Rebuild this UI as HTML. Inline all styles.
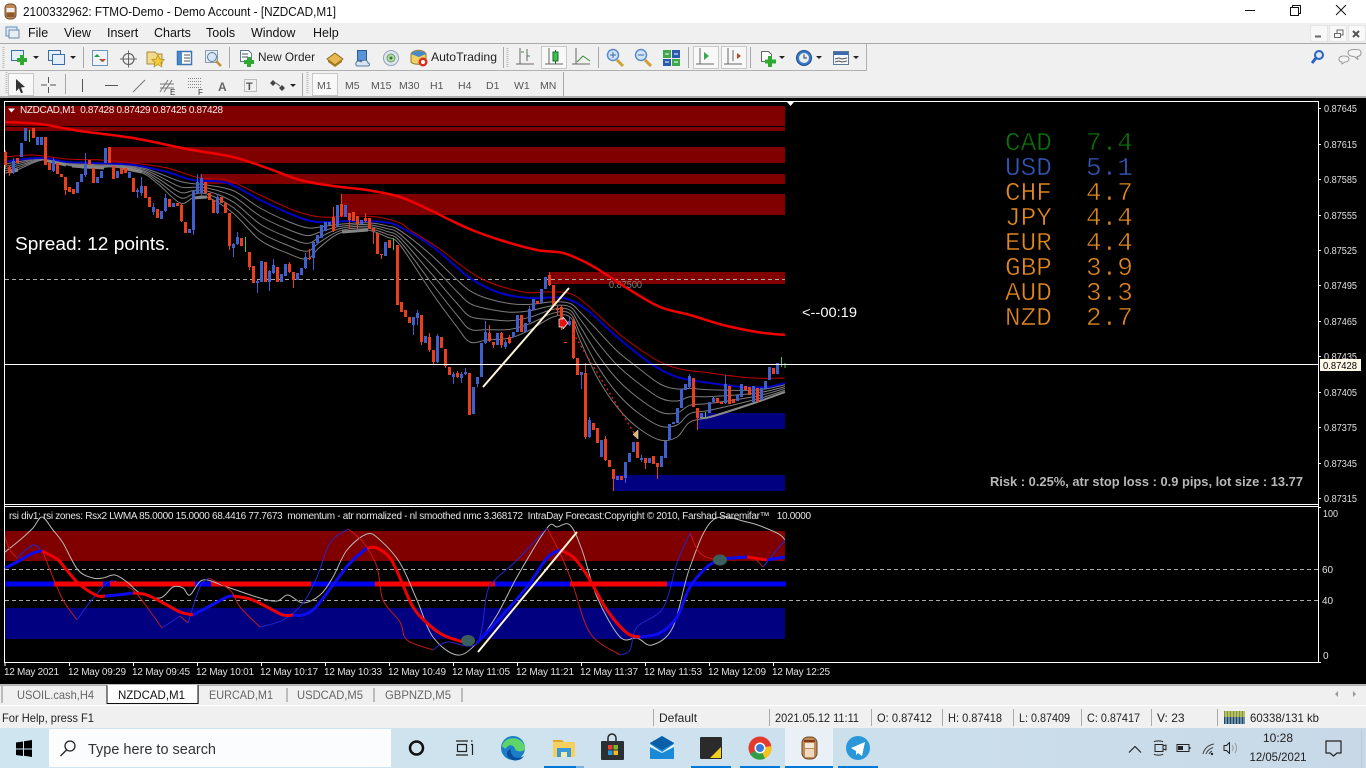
<!DOCTYPE html>
<html><head><meta charset="utf-8"><title>MT4</title>
<style>
html,body{margin:0;padding:0;background:#000;overflow:hidden}
svg{display:block;font-family:"Liberation Sans",sans-serif}
text{white-space:pre}
.m{font-size:12.5px;fill:#111}
.ax{font-size:10px;fill:#e0e0e0}
.tf{font-size:10.5px;fill:#555}
.st{font-size:12px;fill:#222}
.tb{font-size:12px;fill:#666}
.cur{font-family:"Liberation Mono",monospace;font-size:26px;stroke:#000;stroke-width:.55}
.sep{stroke:#a8a8a8;stroke-width:1}
.pr{fill:#f8f8f8;stroke:#c8c8c8}
path{stroke-linejoin:round}
</style></head><body>
<svg width="1366" height="768" viewBox="0 0 1366 768" xmlns="http://www.w3.org/2000/svg">
<!-- title -->
<rect width="1366" height="23" fill="#fff"/>
<g>
<rect x="5" y="4" width="11" height="15" rx="4" fill="#c08a55" stroke="#6b4a2c"/>
<rect x="6.500" y="8" width="8" height="4" fill="#eee"/>
<rect x="6.500" y="13" width="8" height="4" fill="#8a5a30"/>
</g>
<text x="23" y="16" class="m" textLength="313" lengthAdjust="spacingAndGlyphs">2100332962: FTMO-Demo - Demo Account - [NZDCAD,M1]</text>
<path d="M1245 10.5h10" stroke="#111"/>
<path d="M1290.500 7.500h8v8h-8zM1292.500 7.500v-2h8v8h-2" fill="none" stroke="#111"/>
<path d="M1336 5l10 10M1346 5l-10 10" stroke="#111"/>
<!-- menu -->
<rect y="23" width="1366" height="75" fill="#f0f0f0"/>
<g>
<rect x="6" y="27" width="11" height="9" fill="#dfeaf6" stroke="#5b8fc0"/><rect x="9" y="30" width="10" height="8" fill="#e8eef6" stroke="#6a8aa8"/>
<text x="28" y="37" class="m">File</text><text x="64" y="37" class="m">View</text><text x="107" y="37" class="m">Insert</text><text x="154" y="37" class="m">Charts</text><text x="206" y="37" class="m">Tools</text><text x="251" y="37" class="m">Window</text><text x="313" y="37" class="m">Help</text>
</g>
<g fill="#f8f8f8" stroke="#e4e4e4"><rect x="1310.500" y="25.500" width="17" height="16"/><rect x="1329.500" y="25.500" width="17" height="16"/><rect x="1348.500" y="25.500" width="17" height="16"/></g>
<path d="M1315 36.500h6" stroke="#666" stroke-width="2"/>
<path d="M1334.500 33.500h6v4h-6zM1337 33v-3h6v5h-2" fill="none" stroke="#666"/>
<path d="M1353 31l6 6M1359 31l-6 6" stroke="#555" stroke-width="2"/>
<path d="M0 43.500H1366" stroke="#a8a8a8"/>
<path d="M0 70.500H866.500V44" fill="none" stroke="#b0b0b0"/>
<path d="M0 97H1366" stroke="#999" stroke-width="1.500"/>
<!-- toolbar 1 -->
<path d="M3.500 47V68M6.500 72V94M507.500 48V67M307.500 72V94" stroke="#bbb" stroke-dasharray="1 1" stroke-width="2"/>
<rect x="11.500" y="50.500" width="12" height="10" fill="#e4eef8" stroke="#3a6ea5"/>
<path d="M22 55v10M17 60h10" stroke="#2eaa30" stroke-width="4"/>
<path d="M33 56h6l-3 3z" fill="#222"/>
<rect x="48.500" y="50.500" width="12" height="10" fill="#e4eef8" stroke="#3a6ea5"/><rect x="52.500" y="54.500" width="12" height="10" fill="#e4eef8" stroke="#3a6ea5"/>
<path d="M70 56h6l-3 3z" fill="#222"/>
<path class="sep" d="M83.500 47V68"/>
<rect x="92.500" y="50.500" width="15" height="15" fill="#eef4fa" stroke="#6a94bb"/><path d="M97 54l3 3h-6zM102 62l3-3h-6z" fill="#2a9a3a"/><path d="M103 62l-3-3h6z" fill="#d84020"/>
<circle cx="128.500" cy="59" r="5.500" fill="none" stroke="#666" stroke-width="1.200"/><path d="M128.500 50.500v17M120 59h17" stroke="#666"/>
<path d="M147 52h8l2 2h5v10h-15z" fill="#f3d98a" stroke="#a88a3a"/><path d="M158 55l2 4 4.500.5-3.500 3 1 4.500-4-2.500-4 2.500 1-4.500-3.500-3 4.500-.5z" fill="#f2c93a" stroke="#a88a20" stroke-width=".7"/>
<rect x="177.500" y="51.500" width="14" height="13" fill="#fff" stroke="#3a74b5" stroke-width="1.500"/><path d="M178 52h4v12h-4z" fill="#4a88c8"/><path d="M184 55h6M184 58h6M184 61h6" stroke="#555"/>
<rect x="205.500" y="50.500" width="12" height="12" fill="#e8eef5" stroke="#8a9ab0"/><circle cx="212" cy="57" r="4.500" fill="#d6e6f5" stroke="#5a7a9a"/><path d="M216 61l5 5" stroke="#c09030" stroke-width="2.500"/>
<path class="sep" d="M229.500 47V68"/>
<path d="M240.500 50.500h8l3 3v8h-11z" fill="#fff" stroke="#5a7a9a"/><path d="M242 54h6M242 57h6" stroke="#456"/><path d="M249 57v10M244 62h10" stroke="#2eaa30" stroke-width="4"/>
<text x="258" y="61" class="st" textLength="57" lengthAdjust="spacingAndGlyphs">New Order</text>
<path d="M327 59l8-6 8 6-8 6z" fill="#e8b850" stroke="#8a6a20"/><path d="M328 60l7 5 7-5v2l-7 5-7-5z" fill="#a87a20"/>
<rect x="357.500" y="50.500" width="9" height="10" fill="#5a94d8" stroke="#2a5a9a"/><path d="M356 65c-1-4 3-5 5-3 2-3 7-2 7 1 2 0 2 3 0 3h-11z" fill="#d6e4f4" stroke="#5a7a9a"/>
<circle cx="391" cy="58" r="7.500" fill="#dfe6ee" stroke="#8ea2b8"/><circle cx="391" cy="58" r="4" fill="#b7d8a0" stroke="#6a9a6a"/><circle cx="391" cy="58" r="1.500" fill="#2a7a3a"/>
<path d="M411 54c2-5 13-5 15 0v8c-2 3-13 3-15 0z" fill="#f0d060" stroke="#8a7a30"/><path d="M411 54c2-4 13-4 15 0l-7 3z" fill="#4a88c8"/><circle cx="423" cy="62" r="4.500" fill="#d83020"/><circle cx="423" cy="62" r="2" fill="#fff"/>
<text x="431" y="61" class="st" textLength="66" lengthAdjust="spacingAndGlyphs">AutoTrading</text>
<path class="sep" d="M503.500 47V68"/>
<path d="M520 48v16M516 64h18M527 49v12" stroke="#666" fill="none"/><path d="M521 52h3M527 56h3" stroke="#3a8a3a"/>
<rect x="541.500" y="46.500" width="25" height="22" class="pr"/>
<path d="M549 48v16M545 64h18" stroke="#666" fill="none"/><path d="M555.500 50v14" stroke="#1a6a2a"/><rect x="553" y="52" width="5" height="9" fill="#3cc050" stroke="#1a6a2a"/>
<path d="M576 48v16M572 64h18" stroke="#666" fill="none"/><path d="M577 62l6-6 7 5" fill="none" stroke="#3a8a3a"/>
<path class="sep" d="M598.500 47V68"/>
<circle cx="613" cy="55" r="5.500" fill="#cfe2f6" stroke="#5a8ac8" stroke-width="1.500"/><path d="M610 55h6M613 52v6" stroke="#3a6ab0"/><path d="M617 60l6 6" stroke="#d0a030" stroke-width="3"/>
<circle cx="641" cy="55" r="5.500" fill="#cfe2f6" stroke="#5a8ac8" stroke-width="1.500"/><path d="M638 55h6" stroke="#3a6ab0"/><path d="M645 60l6 6" stroke="#d0a030" stroke-width="3"/>
<rect x="663" y="50" width="8" height="8" fill="#3fa84a"/><rect x="672" y="50" width="8" height="8" fill="#2a5ab0"/><rect x="663" y="59" width="8" height="7" fill="#2a5ab0"/><rect x="672" y="59" width="8" height="7" fill="#3fa84a"/><path d="M665 54h4M674 54h4M665 62h4M674 62h4" stroke="#fff"/>
<path class="sep" d="M688.500 47V68"/>
<rect x="693.500" y="46.500" width="25" height="22" class="pr"/><path d="M700 48v16M696 64h18" stroke="#666" fill="none"/><path d="M704 52l5 4-5 4z" fill="#3aa84a"/>
<rect x="721.500" y="46.500" width="25" height="22" class="pr"/><path d="M728 48v16M724 64h18M733 50v11" stroke="#666" fill="none"/><path d="M741 56l-4-3v6z" fill="#c04020"/>
<path class="sep" d="M750.500 47V68"/>
<path d="M761.500 51.500h7l3 3v7h-10z" fill="#fff" stroke="#666"/><path d="M770 56v11M765 61.500h11" stroke="#2eaa30" stroke-width="4"/>
<path d="M779 56h6l-3 3z" fill="#222"/>
<circle cx="804" cy="58" r="7.500" fill="#3a7ac8" stroke="#1a4a8a"/><circle cx="804" cy="58" r="5" fill="#e8eef5"/><path d="M804 54.500V58h3" stroke="#333" fill="none"/>
<path d="M816 56h6l-3 3z" fill="#222"/>
<rect x="833.500" y="51.500" width="15" height="13" fill="#f4f6f8" stroke="#5a7a9a"/><rect x="834" y="52" width="14" height="3" fill="#3a6ab0"/><path d="M835 59l4-1 3 1 5-1M835 62l4-1 3 1 5-1" stroke="#555" fill="none"/>
<path d="M853 56h6l-3 3z" fill="#222"/>
<circle cx="1319" cy="55" r="4" fill="#dce8f6" stroke="#2a62c0" stroke-width="2"/><path d="M1316 58l-4 5" stroke="#2a62c0" stroke-width="3"/>
<path d="M1348 52.500c0-2 2-3 7-3s6 1 6 3-1 4-4 4c0 1 1 2 1 3-2-1-3-3-4-3-4 0-6-2-6-4z" fill="#f4f4f4" stroke="#999"/><path d="M1339 59c0-2 2-3 5-3s5 1 5 3-2 3-4 3l-3 2v-2c-2 0-3-1-3-3z" fill="#f4f4f4" stroke="#999"/>
<!-- toolbar 2 -->
<rect x="8.500" y="73.500" width="25" height="22" class="pr"/>
<path d="M16 79l9 8-4 .5 2 5-2 .8-2-5-3 3z" fill="#333"/>
<path d="M48.500 77v6M48.500 87v6M41 85h6M50 85h6" stroke="#555"/>
<path class="sep" d="M65.500 74V94"/>
<path d="M82.500 79V92" stroke="#555"/><path d="M105 85.500h13" stroke="#555"/><path d="M133 92l12-12" stroke="#777"/>
<path d="M160 92l8-12M164 92l8-12M160 84h14M160 88h14" stroke="#777" fill="none"/><text x="170" y="95" font-size="8" fill="#333">E</text>
<path d="M188 78.500h14M188 81.500h14M188 84.500h14M188 87.500h14" stroke="#888" stroke-dasharray="1 1"/><text x="198" y="95" font-size="8" fill="#333">F</text>
<text x="218" y="91" font-size="12" font-weight="bold" fill="#666">A</text>
<rect x="244.500" y="79.500" width="12" height="12" fill="none" stroke="#888" stroke-dasharray="1 1"/><text x="246" y="90" font-size="11" font-weight="bold" fill="#555">T</text>
<path d="M273 80l3 3-3 3-3-3zM282 85l3 3-3 3-3-3z" fill="#444"/><path d="M276 83l4 3" stroke="#555"/>
<path d="M290 84h6l-3 3z" fill="#222"/>
<path class="sep" d="M302.500 73V97"/>
<rect x="312.500" y="73.500" width="25" height="22" class="pr"/>
<text x="317" y="89" class="tf">M1</text><text x="345" y="89" class="tf">M5</text><text x="371" y="89" class="tf">M15</text><text x="399" y="89" class="tf">M30</text><text x="430" y="89" class="tf">H1</text><text x="458" y="89" class="tf">H4</text><text x="486" y="89" class="tf">D1</text><text x="514" y="89" class="tf">W1</text><text x="540" y="89" class="tf">MN</text>
<path class="sep" d="M563.500 72V97"/>
<!-- chart -->
<rect y="98" width="1366" height="586" fill="#000"/>
<g fill="#800000">
<rect x="5" y="106" width="780" height="20"/><rect x="5" y="127" width="780" height="4"/>
<rect x="108" y="147" width="677" height="16"/>
<rect x="200" y="174" width="585" height="10"/>
<rect x="342" y="194" width="443" height="21"/>
<rect x="549" y="272" width="236" height="12"/>
</g>
<g fill="#000080">
<rect x="698" y="413" width="87" height="16"/>
<rect x="614" y="475" width="171" height="16"/>
</g>
<path d="M4.500 663V101.500H1318.500V663" fill="none" stroke="#fff"/>
<path d="M4.500 504.500H1318.500M4.500 506.500H1318.500M4.500 662.500H1318.500" stroke="#fff"/>
<path d="M787 102h7l-3.500 4z" fill="#fff"/>
<path d="M5 279.500H785" stroke="#aaa" stroke-dasharray="4 3"/>
<text x="609" y="288" font-size="10" fill="#808080" textLength="33" lengthAdjust="spacingAndGlyphs">0.87500</text>
<g id="gray" fill="none" stroke="#7c7c7c" stroke-width="1"></g>
<path class="sm" d="M10 172L18 170M44 160L66 165M72 166L104 168M122 168L142 172M193 198L207 197M342 232L368 230" fill="none" stroke="#858585" stroke-width="3"/>
<path class="sm" d="M700 417L710 417L757 402L785 392" fill="none" stroke="#8a8a8a" stroke-width="2"/>
<path class="sm" fill="none" stroke="#c00000" d="M5 157L33 155L67 159L100 160L133 163L167 168L200 178L227 180L260 195L293 210L320 217L350 216L377 217L400 223L410 230L437 247L480 278L523 292L550 292L577 297L623 337L667 365L710 373L753 378L785 378"/>
<path class="sm" fill="none" stroke="#0000c8" stroke-width="2" d="M5 162L17 160L43 158L67 162L93 163L133 165L167 172L193 180L227 183L260 200L293 215L317 222L350 221L383 222L400 227L433 247L470 278L500 293L530 298L563 298L587 310L617 337L650 363L677 377L710 383L743 387L767 387L785 383"/>
<g id="cand"></g>
<path class="sm" fill="none" stroke="#f00000" stroke-width="2.500" d="M5 122L40 124L80 131L133 138L187 149L233 157L267 168L300 180L333 186L367 190L400 197L430 210L450 220L472 230L500 240L537 250L563 253L587 263L607 275L630 290L660 307L690 315L723 325L757 332L785 335"/>
<path d="M5 364.500H1318.500" stroke="#fff"/>
<path d="M483 387L569 288" stroke="#fff6d8" stroke-width="2"/>
<path d="M573 333L634 433" stroke="#d02818" stroke-width="1.400" stroke-dasharray="2 3"/>
<path d="M638 430v9l-5-4.500z" fill="#d8b070" stroke="#fff" stroke-width=".5"/>
<path d="M559 319h4v-2l5 6-5 6v-2h-4z" fill="#e81010" stroke="#fff" stroke-width=".7"/>
<text x="15" y="250" font-size="18.500" fill="#fff" textLength="155" lengthAdjust="spacingAndGlyphs">Spread: 12 points.</text>
<text x="802" y="317" font-size="13.500" fill="#fff" textLength="55" lengthAdjust="spacingAndGlyphs">&lt;--00:19</text>
<path d="M8 108.500h7l-3.500 4z" fill="#fff"/>
<text x="20" y="113" font-size="10" fill="#eee" textLength="203">NZDCAD,M1  0.87428 0.87429 0.87425 0.87428</text>
<g class="cur">
<text x="1005" y="150" fill="#0b700b">CAD</text><text x="1086" y="150" fill="#0b700b">7.4</text>
<text x="1005" y="175" fill="#3556b8">USD</text><text x="1086" y="175" fill="#3556b8">5.1</text>
<g fill="#e08820">
<text x="1005" y="200">CHF</text><text x="1086" y="200">4.7</text>
<text x="1005" y="225">JPY</text><text x="1086" y="225">4.4</text>
<text x="1005" y="250">EUR</text><text x="1086" y="250">4.4</text>
<text x="1005" y="275">GBP</text><text x="1086" y="275">3.9</text>
<text x="1005" y="300">AUD</text><text x="1086" y="300">3.3</text>
<text x="1005" y="325">NZD</text><text x="1086" y="325">2.7</text>
</g></g>
<text x="990" y="486" font-size="12.500" font-weight="bold" fill="#b8b8b8" textLength="313" lengthAdjust="spacingAndGlyphs">Risk : 0.25%, atr stop loss : 0.9 pips, lot size : 13.77</text>
<!-- price axis -->
<path d="M1318 108.500h3M1318 144.500h3M1318 179.500h3M1318 215.500h3M1318 250.500h3M1318 285.500h3M1318 321.500h3M1318 356.500h3M1318 392.500h3M1318 427.500h3M1318 463.500h3M1318 498.500h3M1318 507.500h3M1318 662.500h3" stroke="#fff"/>
<g class="ax">
<text x="1324" y="112" textLength="33" lengthAdjust="spacingAndGlyphs">0.87645</text><text x="1324" y="148" textLength="33" lengthAdjust="spacingAndGlyphs">0.87615</text><text x="1324" y="183" textLength="33" lengthAdjust="spacingAndGlyphs">0.87585</text><text x="1324" y="219" textLength="33" lengthAdjust="spacingAndGlyphs">0.87555</text><text x="1324" y="254" textLength="33" lengthAdjust="spacingAndGlyphs">0.87525</text><text x="1324" y="289" textLength="33" lengthAdjust="spacingAndGlyphs">0.87495</text><text x="1324" y="325" textLength="33" lengthAdjust="spacingAndGlyphs">0.87465</text><text x="1324" y="360" textLength="33" lengthAdjust="spacingAndGlyphs">0.87435</text><text x="1324" y="396" textLength="33" lengthAdjust="spacingAndGlyphs">0.87405</text><text x="1324" y="431" textLength="33" lengthAdjust="spacingAndGlyphs">0.87375</text><text x="1324" y="467" textLength="33" lengthAdjust="spacingAndGlyphs">0.87345</text><text x="1324" y="502" textLength="33" lengthAdjust="spacingAndGlyphs">0.87315</text>
<text x="1323" y="517" textLength="15" lengthAdjust="spacingAndGlyphs">100</text><text x="1322" y="573">60</text><text x="1322" y="604">40</text><text x="1323" y="659">0</text>
</g>
<rect x="1320" y="359" width="41" height="12" fill="#fff8e8"/>
<text x="1323" y="369" font-size="10" fill="#000" textLength="34" lengthAdjust="spacingAndGlyphs">0.87428</text>
<!-- sub window -->
<rect x="5" y="531" width="780" height="30" fill="#800000"/>
<rect x="5" y="608" width="780" height="31" fill="#000080"/>
<path d="M5 569.500H1318M5 600.500H1318" stroke="#aaa" stroke-dasharray="4 3"/>
<g stroke-width="5">
<path d="M5 584H54M103 584H110M195 584H211M311 584H375M495 584H570M667 584H786" stroke="#0000f0"/>
<path d="M54 584H103M110 584H195M211 584H311M375 584H495M570 584H667" stroke="#f80000"/>
</g>
<path class="sm" fill="none" stroke="#b8b8b8" d="M5 552L20 540L33 528L42 517L53 530L63 543L78 570L93 578L103 578L115 575L127 582L140 593L160 598L173 587L183 588L190 595L203 580L227 587L260 598L277 601L288 595L303 603L320 595L333 577L347 550L367 534L380 540L400 563L417 600L433 637L457 655L477 643L497 615L517 577L547 528L557 527L570 525L582 550L597 597L620 637L637 638L652 645L673 627L690 567L713 520L747 522L777 533L785 540"/>
<g fill="none" stroke="#c81818">
<path class="sm" d="M5 537L10 550L17 558M43 552L50 570L63 600L77 620M115 581L133 590L147 607L162 628M180 616L188 623M209 578L230 590L240 607L260 627M348 529L363 542L377 567L383 600L400 622L407 640L433 650M547 528L560 553L572 582L590 633L620 655M690 533L700 553L720 560L750 557L763 567"/>
</g>
<g fill="none" stroke="#2424d0">
<path class="sm" d="M17 558L33 545L43 552M77 620L90 602L107 583L115 581M162 628L180 616M188 623L200 587L209 578M260 627L283 620L303 603L317 577L330 543L348 529M433 650L447 642L477 643L487 593L495 580L517 560L547 528M620 655L630 650L637 627L663 608L677 563L690 533M763 567L785 540"/>
</g>
<g fill="none" stroke-width="3">
<path class="sm" stroke="#0c0cf0" d="M5 568L17 562L33 553L42 551M105 596L117 595L133 593M193 615L210 606L227 597L233 596M293 615L303 615L315 608L333 585L350 563L367 548M477 643L500 618L527 587L547 558L560 550M640 637L660 633L677 617L690 587L707 567L720 560L733 558L747 557M767 560L785 557"/>
<path class="sm" stroke="#f00000" d="M42 551L57 559L65 568L77 582L87 590L98 596L105 596M133 593L147 595L167 605L180 612L193 615M233 596L250 599L267 607L283 615L293 615M367 548L377 548L390 558L400 578L413 607L427 623L443 635L463 642M560 550L573 557L587 575L607 610L627 633L640 637M747 557L767 560"/>
</g>
<ellipse cx="468" cy="640.500" rx="7" ry="5.500" fill="#3b5f5a"/>
<ellipse cx="720" cy="560" rx="7" ry="5.500" fill="#3b5f5a"/>
<path d="M478 652L577 532" stroke="#fff6d8" stroke-width="2"/>
<text x="9" y="519" font-size="10" fill="#e4e4e4" textLength="802">rsi div1: rsi zones: Rsx2 LWMA 85.0000 15.0000 68.4416 77.7673  momentum - atr normalized - nl smoothed nmc 3.368172  IntraDay Forecast:Copyright © 2010, Farshad Saremifar™   10.0000</text>
<!-- time axis -->
<path d="M5 663v3M69.500 663v3M133.500 663v3M197.500 663v3M261.500 663v3M325.500 663v3M389.500 663v3M453.500 663v3M517.500 663v3M581.500 663v3M645.500 663v3M709.500 663v3M773.500 663v3" stroke="#fff"/>
<g class="ax">
<text x="4" y="675" textLength="55">12 May 2021</text><text x="68" y="675" textLength="58">12 May 09:29</text><text x="132" y="675" textLength="58">12 May 09:45</text><text x="196" y="675" textLength="58">12 May 10:01</text><text x="260" y="675" textLength="58">12 May 10:17</text><text x="324" y="675" textLength="58">12 May 10:33</text><text x="388" y="675" textLength="58">12 May 10:49</text><text x="452" y="675" textLength="58">12 May 11:05</text><text x="516" y="675" textLength="58">12 May 11:21</text><text x="580" y="675" textLength="58">12 May 11:37</text><text x="644" y="675" textLength="58">12 May 11:53</text><text x="708" y="675" textLength="58">12 May 12:09</text><text x="772" y="675" textLength="58">12 May 12:25</text>
</g>
<!-- tabs -->
<rect y="684" width="1366" height="44" fill="#f0f0f0"/>
<path d="M0 684.500H1366" stroke="#fff"/>
<path d="M0 685H1366" stroke="#777"/>
<rect x="107" y="685" width="91" height="19" fill="#fff"/>
<path d="M107 685.500V703.500H198V685" fill="none" stroke="#111"/>
<path d="M198.500 686V704" stroke="#666"/>
<path d="M2 686V703M287 688V702M374 688V702M462 688V702" stroke="#888"/>
<text x="17" y="699" class="tb" textLength="77" lengthAdjust="spacingAndGlyphs">USOIL.cash,H4</text>
<text x="118" y="699" class="tb" style="fill:#111" textLength="67" lengthAdjust="spacingAndGlyphs">NZDCAD,M1</text>
<text x="209" y="699" class="tb" textLength="64" lengthAdjust="spacingAndGlyphs">EURCAD,M1</text>
<text x="297" y="699" class="tb" textLength="66" lengthAdjust="spacingAndGlyphs">USDCAD,M5</text>
<text x="385" y="699" class="tb" textLength="66" lengthAdjust="spacingAndGlyphs">GBPNZD,M5</text>
<path d="M1338 691v6l-3-3zM1353 691v6l3-3z" fill="#999"/>
<path d="M0 705.500H1366" stroke="#fff"/>
<!-- status -->
<text x="2" y="722" class="st" textLength="92" lengthAdjust="spacingAndGlyphs">For Help, press F1</text>
<path d="M653.500 709V726M769.500 709V726M871.500 709V726M942.500 709V726M1013.500 709V726M1081.500 709V726M1151.500 709V726M1217.500 709V726" stroke="#aaa"/>
<text x="659" y="722" class="st">Default</text>
<text x="775" y="722" class="st" textLength="84" lengthAdjust="spacingAndGlyphs">2021.05.12 11:11</text>
<text x="877" y="722" class="st" textLength="55" lengthAdjust="spacingAndGlyphs">O: 0.87412</text>
<text x="948" y="722" class="st" textLength="54" lengthAdjust="spacingAndGlyphs">H: 0.87418</text>
<text x="1019" y="722" class="st" textLength="51" lengthAdjust="spacingAndGlyphs">L: 0.87409</text>
<text x="1087" y="722" class="st" textLength="53" lengthAdjust="spacingAndGlyphs">C: 0.87417</text>
<text x="1157" y="722" class="st">V: 23</text>
<path d="M1224 711h21v6h-21z" fill="#8a9a20"/><path d="M1224 717h21v7h-21z" fill="#1a4a6a"/>
<path d="M1226 711v13M1229 711v13M1232 711v13M1235 711v13M1238 711v13M1241 711v13M1244 711v13" stroke="#f0f0f0" stroke-width=".8"/>
<text x="1250" y="722" class="st" textLength="69" lengthAdjust="spacingAndGlyphs">60338/131 kb</text>
<!-- taskbar -->
<defs><linearGradient id="tb" x1="0" x2="1" y1="0" y2="0"><stop offset="0" stop-color="#cfe5ef"/><stop offset=".5" stop-color="#cde2ee"/><stop offset="1" stop-color="#c8d8e7"/></linearGradient></defs>
<rect y="728" width="1366" height="40" fill="url(#tb)"/>
<path d="M16 742.500l7-1v7h-7zM24 741.300l8-1.300v8.500h-8zM16 749.500h7v6.500l-7-1zM24 749.500h8V757l-8-1.200z" fill="#000"/>
<rect x="49" y="729" width="342" height="38" fill="#fbfcfd"/>
<circle cx="70" cy="746" r="5" fill="none" stroke="#222" stroke-width="1.300"/><path d="M66.500 750l-6 6" stroke="#222" stroke-width="1.300"/>
<text x="88" y="754" font-size="14.500" fill="#333" textLength="128" lengthAdjust="spacingAndGlyphs">Type here to search</text>
<circle cx="416.500" cy="748" r="6.500" fill="none" stroke="#111" stroke-width="2.500"/>
<path d="M456 741h12M456 755h12M457.500 744.500h9v7h-9zM471 741h1.500M471 744.500h1.500v10.500" fill="none" stroke="#222" stroke-width="1.200"/>
<!-- edge -->
<circle cx="513" cy="748" r="12" fill="#1a7fc8"/><path d="M502 746c2-10 20-11 23 1 1 6-9 5-10 2-1-4-5-5-8-2-2 3-3 1-5-1z" fill="#5fd46a"/><path d="M511 752c1 5 6 8 13 4-3 5-11 6-15 2-3-2-3-8 2-9-1 1 0 2 0 3z" fill="#0a4f9a"/>
<!-- explorer -->
<path d="M553 740h9l2 2h-11z" fill="#e0a82a"/><path d="M553 742h22v15h-22z" fill="#f6cf5c"/><rect x="557" y="748" width="14" height="9" fill="#3a9ad8"/><rect x="561" y="752" width="6" height="5" fill="#f6e8a8"/>
<!-- store -->
<path d="M608 741v-3a4 4 0 0 1 8 0v3" fill="none" stroke="#222" stroke-width="1.500"/><rect x="601" y="741" width="23" height="19" rx="1" fill="#2b2f33"/>
<rect x="608" y="745" width="4.500" height="4.500" fill="#e8402a"/><rect x="613.500" y="745" width="4.500" height="4.500" fill="#7ab82a"/><rect x="608" y="750.500" width="4.500" height="4.500" fill="#1a9ae0"/><rect x="613.500" y="750.500" width="4.500" height="4.500" fill="#f8b818"/>
<!-- mail -->
<path d="M650 743l12-7 12 7v16h-24z" fill="#1a8ad8"/><path d="M650 744l12 8 12-8v3l-12 6-12-6z" fill="#e8f4fb"/><path d="M650 743l12-7 12 7-12 7z" fill="#0a5fa8"/>
<!-- sticky -->
<rect x="700" y="737" width="22" height="22" rx="1" fill="#2b2b2b"/><path d="M711 758l11-11v11z" fill="#f2d020" transform="translate(-1 0)"/>
<!-- chrome -->
<circle cx="760" cy="748" r="11.500" fill="#e23a2e"/><path d="M760 748L750 754A11.500 11.500 0 0 0 765 758.500z" fill="#2f9e44"/><path d="M760 748L771.500 746A11.500 11.500 0 0 1 765 758.500z" fill="#f6c21c"/><circle cx="760" cy="748" r="5.500" fill="#fff"/><circle cx="760" cy="748" r="4" fill="#3a78d8"/>
<!-- mt active -->
<rect x="785" y="728" width="48" height="40" fill="#e9f1f7"/>
<rect x="802" y="737" width="15" height="22" rx="6" fill="#c08a55" stroke="#6b4a2c"/><rect x="805" y="743" width="9" height="5" fill="#f2e8d8"/><rect x="805" y="749" width="9" height="8" fill="#f0d8c0"/><path d="M804 741h11" stroke="#8a3a20" stroke-width="2"/>
<!-- telegram -->
<circle cx="858" cy="748" r="12" fill="#2a98d8"/><path d="M851 748l14-6-3 14-4-3-2 2v-4z" fill="#fff"/>
<g fill="#0078d7"><rect x="544" y="766" width="32" height="2"/><rect x="691" y="766" width="40" height="2"/><rect x="740" y="766" width="40" height="2"/><rect x="785" y="766" width="48" height="2"/><rect x="838" y="766" width="40" height="2"/></g>
<rect x="576" y="766" width="8" height="2" fill="#7ab0dc"/>
<!-- tray -->
<path d="M1129 752.500l6-6 6 6" fill="none" stroke="#222" stroke-width="1.200"/>
<path d="M1155 744.500h8v7h-8zM1163 746l3-1v5l-3-1M1154 742c1-1.500 8-1.500 9 0M1154 754c1 1.500 8 1.500 9 0" fill="none" stroke="#222"/>
<rect x="1177" y="744.500" width="12" height="7" fill="none" stroke="#222"/><rect x="1178" y="746" width="5" height="4" fill="#222"/><rect x="1189" y="747" width="1.500" height="2" fill="#222"/>
<path d="M1203 754c1-5 5-9 11-10M1206 754c1-3 3-5 7-6.500M1209 754c.5-1 1-2 3-3" fill="none" stroke="#444"/><circle cx="1212" cy="754" r="1.200" fill="#222"/>
<path d="M1224 745.500h2.500l3-3v11l-3-3h-2.500z" fill="none" stroke="#222"/><path d="M1232 745c1.500 2 1.500 4 0 6M1235 743c2 3 2 7 0 10" fill="none" stroke="#999"/>
<text x="1278" y="742" font-size="12" fill="#222" text-anchor="middle">10:28</text>
<text x="1278" y="761" font-size="12" fill="#222" text-anchor="middle" textLength="57" lengthAdjust="spacingAndGlyphs">12/05/2021</text>
<path d="M1326 741h15v12h-4l-3.500 3-3.500-3h-4z" fill="none" stroke="#222" stroke-width="1.200"/>
<path d="M1361.500 729V768" stroke="#bccbd9"/>
</svg>
<script>
(function(){
function smooth(d){
  return d.split('M').filter(Boolean).map(function(seg){
    var p=seg.split('L').map(function(q){return q.trim().split(/\s+/).map(Number)});
    var o='M'+p[0][0]+' '+p[0][1];
    for(var i=0;i<p.length-1;i++){
      var a=p[Math.max(i-1,0)],b=p[i],c=p[i+1],e=p[Math.min(i+2,p.length-1)];
      o+='C'+(b[0]+(c[0]-a[0])/6).toFixed(1)+' '+(b[1]+(c[1]-a[1])/6).toFixed(1)+' '+(c[0]-(e[0]-b[0])/6).toFixed(1)+' '+(c[1]-(e[1]-b[1])/6).toFixed(1)+' '+c[0]+' '+c[1];
    }
    return o;
  }).join('');
}
var S=[[5,162,173],[17,160,170],[43,158,160],[67,162,165],[83,163,168],[100,164,168],[113,164,167],[140,166,172],[157,170,183],[180,176,203],[193,180,198],[207,182,197],[233,185,213],[260,200,240],[287,213,253],[307,220,259],[320,222,247],[340,222,233],[367,221,230],[387,223,237],[400,227,245],[430,245,290],[457,268,327],[470,278,342],[487,288,340],[510,295,338],[530,298,330],[553,298,317],[570,300,317],[580,305,340],[597,318,377],[617,337,407],[637,352,427],[660,370,440],[677,377,437],[690,380,422],[710,383,417],[757,387,402],[785,383,392]];
var h='';[.2,.4,.6,.8,1].forEach(function(f){var d='';S.forEach(function(p,i){d+=(i?'L':'M')+p[0]+' '+(p[1]+(p[2]-p[1])*f).toFixed(1)});h+='<path d="'+smooth(d)+'"/>'});
document.getElementById('gray').innerHTML=h;
var els=document.querySelectorAll('path.sm');
for(var k=0;k<els.length;k++){els[k].setAttribute('d',smooth(els[k].getAttribute('d')));}
var C="r152,165,150,168;r167,173,165,176;b161,172,158,174;r158,163;b143,157;b128,141;g130,142;r128,138;b137,145;b137,145;r137,165;r163,170;b160,171,158,172;r163,174;r174,177;r177,190,177,195;r187,192;r189,194;b182,193;b174,182;b165,175,153,177;r160,165;r168,183;b177,183;b171,178;b148,163;r147,163;r166,179;b171,178;r168,174;r168,173;b172,178;r178,192;b190,192,188,198;b186,193,177,196;r186,198;r197,207;b207,212,203,215;r209,218;b211,219;b198,211,194,212;r199,207;b203,207;r203,206;r205,221,203,222;r222,233;b229,233;b191,230,190,235;b182,193,174,194;b178,193,174,195;r182,193;r193,200;r200,213;b197,213,195,214;r197,203;r203,213;r213,246,213,250;b244,248,243,257;b237,244,232,245;r238,246;g237,252;r252,267,252,270;r266,283;b281,283,280,293;b261,282;r262,282;b271,282,270,291;b265,273,259,274;r267,282;b274,282;b264,276;r264,272,262,273;r272,280,272,288;b273,280;b268,275;b257,268,253,269;r258,259,249,260;b242,258,242,270;b235,243;b225,238;b222,231;b222,225;r217,231,207,232;b205,227;r204,216,194,217;b205,217;r213,220,213,229;r212,221;r216,224,216,229;b220,224;r218,221,213,222;r218,229;r228,231,228,244;r233,254;r254,255,254,259;b242,256;r240,248;g240,248,238,250;r245,305;r302,312;r310,317;r317,323;b317,325,317,335;b313,318,310,325;r315,342,315,345;b336,343;r337,350,333,352;r350,362,350,364;b336,362,334,363;r337,348;r349,366,349,368;r367,375;b374,377,372,384;r373,377,371,378;b374,378,372,383;b372,374,368,375;r373,415;b387,414;b377,384,377,387;b343,377;b332,343,321,344;r333,341,325,342;r342,345,342,348;b333,345;r333,345,332,348;b342,347,340,349;r337,343,335,344;b332,337;b315,332;r315,332;b323,332;b309,322,306,323;b299,310;r301,304;b289,303;b277,289;r275,285,272,286;r285,305;r308,310,306,315;r307,325,305,330;r342,343,342,343;b321,325,317,326;r321,358,317,359;r358,375;b372,375,372,389;r373,437,363,439;b420,437,417,438;r423,430;r428,443;b440,457;r439,460,436,461;r460,467;r469,479,469,491;b476,480;r476,480;b462,478,462,483;b453,462;b442,452;r442,458;b458,460,455,462;r458,463,458,469;b458,463;r456,464;r463,467,463,479;b456,467;b441,458;b424,440;b422,424;b408,423;b389,408;b384,390;b376,387,374,388;r378,407;r408,418,408,430;b413,417;g412,417;b402,413;b398,402,396,403;r398,403;r402,404;b384,403,375,404;r386,404;r399,403;b395,401;b384,397;r386,390;r387,395;b386,402;r388,402;b388,400;b381,389;b367,380;r368,374;b363,374;g357,367;g363,368".split(';');
var w={r:'',b:'',g:''},B={r:'',b:'',g:''};
C.forEach(function(s,i){var t=s[0],a=s.slice(1).split(',').map(Number),x=5.5+4*i,bt=a[0],bb=Math.max(a[1],a[0]+1),wt=a.length>2?a[2]:bt,wb=a.length>3?a[3]:bb;
if(i==C.length-1)x=785;
w[t]+='M'+x+' '+wt+'V'+wb;if(t!='g')B[t]+='M'+x+' '+bt+'V'+bb;});
var col={r:'#e8401c',b:'#3f60cc',g:'#30d040'};var o='';
['r','b','g'].forEach(function(t){o+='<path d="'+w[t]+'" stroke="'+col[t]+'" fill="none"/>';if(B[t])o+='<path d="'+B[t]+'" stroke="'+col[t]+'" stroke-width="3" fill="none"/>'});
document.getElementById('cand').innerHTML=o;
})();
</script>
</body></html>
